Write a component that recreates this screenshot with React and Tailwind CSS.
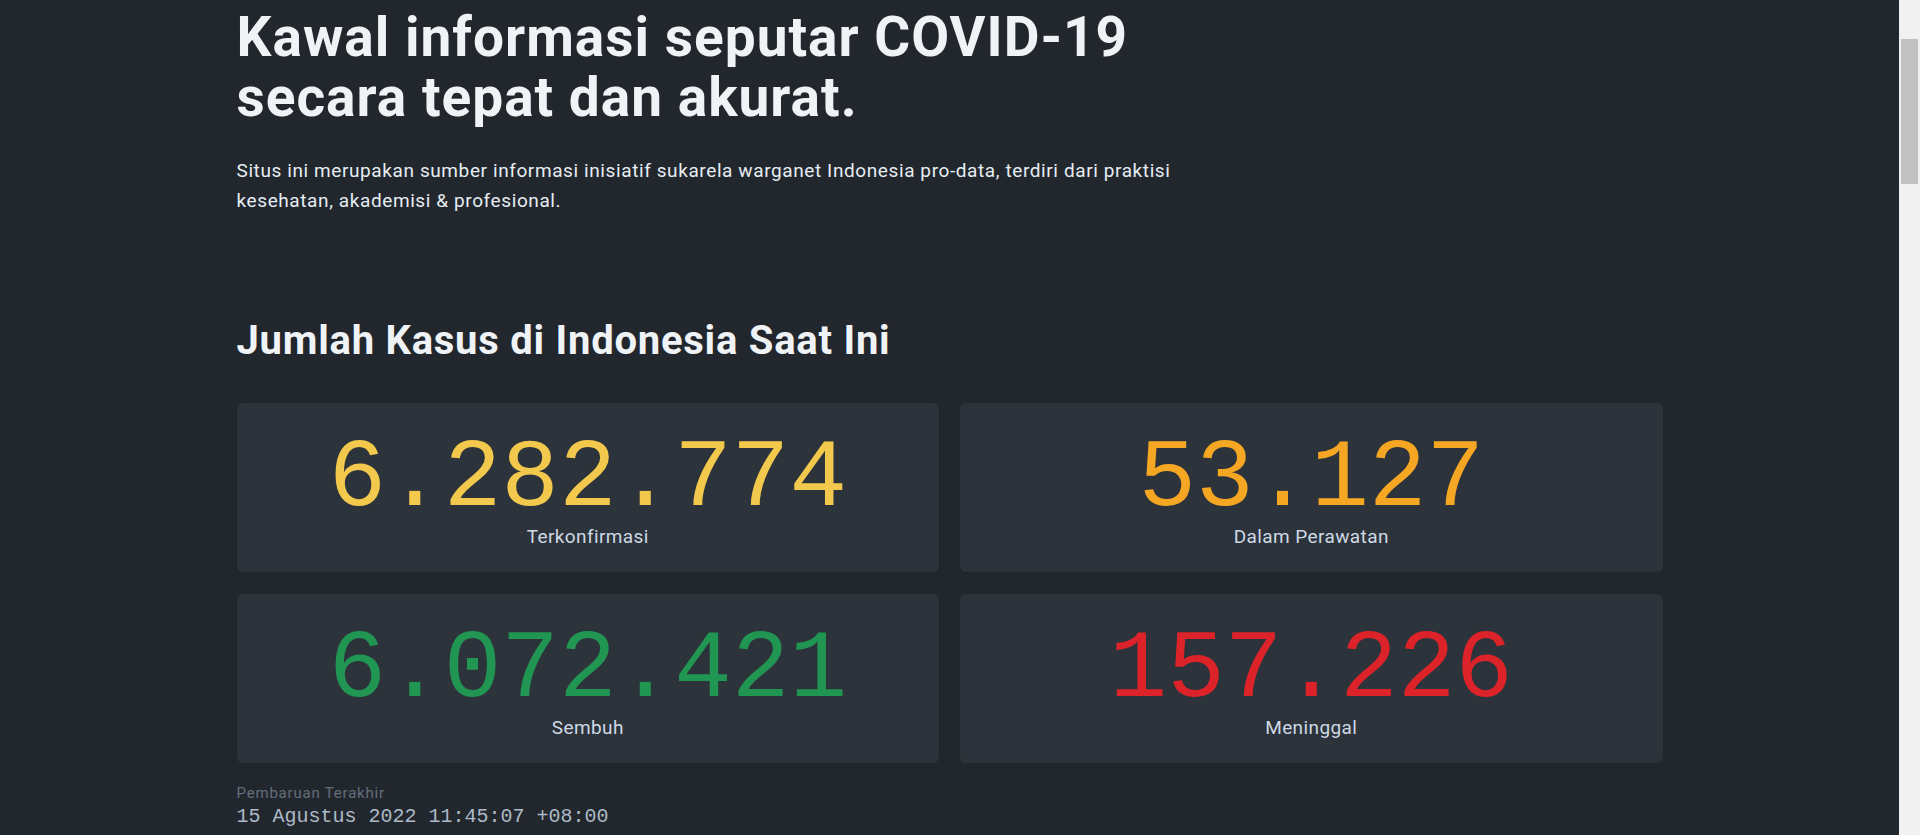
import React from 'react';

const stats = [
    { value: '6.282.774', label: 'Terkonfirmasi', color: 'text-[#f2c94c]' },
    { value: '53.127', label: 'Dalam Perawatan', color: 'text-[#f5a623]' },
    { value: '6.072.421', label: 'Sembuh', color: 'text-[#219653]' },
    { value: '157.226', label: 'Meninggal', color: 'text-[#dc2329]' },
];

function StatCard({ value, label, color }) {
    return (
        <div className="bg-[#2d333b] rounded-md pt-[34px] pb-[21px] flex flex-col items-center">
            <div className={`font-['Liberation_Mono',monospace] text-[96px] leading-[86px] ${color}`}>
                {value}
            </div>
            <div className="text-[19px] leading-[28px] tracking-[0.4px] text-[#cdd9e5]">{label}</div>
        </div>
    );
}

export default function App() {
    return (
        <div className="h-[835px] overflow-hidden flex bg-[#22272e] font-['Roboto',sans-serif]">
            <main className="flex-1">
                <div className="w-[1426px] mx-auto pt-[7px]">
                    <h1 className="text-[55px] leading-[60px] tracking-[1px] font-bold text-[#f0f3f6]">
                        Kawal informasi seputar COVID-19
                        <br />
                        secara tepat dan akurat.
                    </h1>
                    <p className="mt-[29px] text-[19px] leading-[30px] tracking-[0.6px] text-[#e6edf3]">
                        Situs ini merupakan sumber informasi inisiatif sukarela warganet Indonesia pro-data, terdiri dari praktisi
                        <br />
                        kesehatan, akademisi &amp; profesional.
                    </p>

                    <h2 className="mt-[102px] text-[40px] leading-[46px] tracking-[0.75px] font-bold text-[#f0f3f6]">
                        Jumlah Kasus di Indonesia Saat Ini
                    </h2>

                    <div className="mt-[39px] grid grid-cols-2 gap-x-[21px] gap-y-[22px]">
                        {stats.map((s) => (
                            <StatCard key={s.label} {...s} />
                        ))}
                    </div>

                    <div className="mt-[20px]">
                        <div className="text-[15px] leading-[20px] tracking-[0.8px] text-[#636e7b]">Pembaruan Terakhir</div>
                        <div className="font-['Liberation_Mono',monospace] text-[20px] leading-[28px] text-[#adbac7]">
                            15 Agustus 2022 11:45:07 +08:00
                        </div>
                    </div>
                </div>
            </main>

            {/* scrollbar */}
            <div className="w-[21px] bg-[#f1f1f1] pt-[39px] px-[2px]">
                <div className="h-[145px] bg-[#c1c1c1]"></div>
            </div>
        </div>
    );
}
